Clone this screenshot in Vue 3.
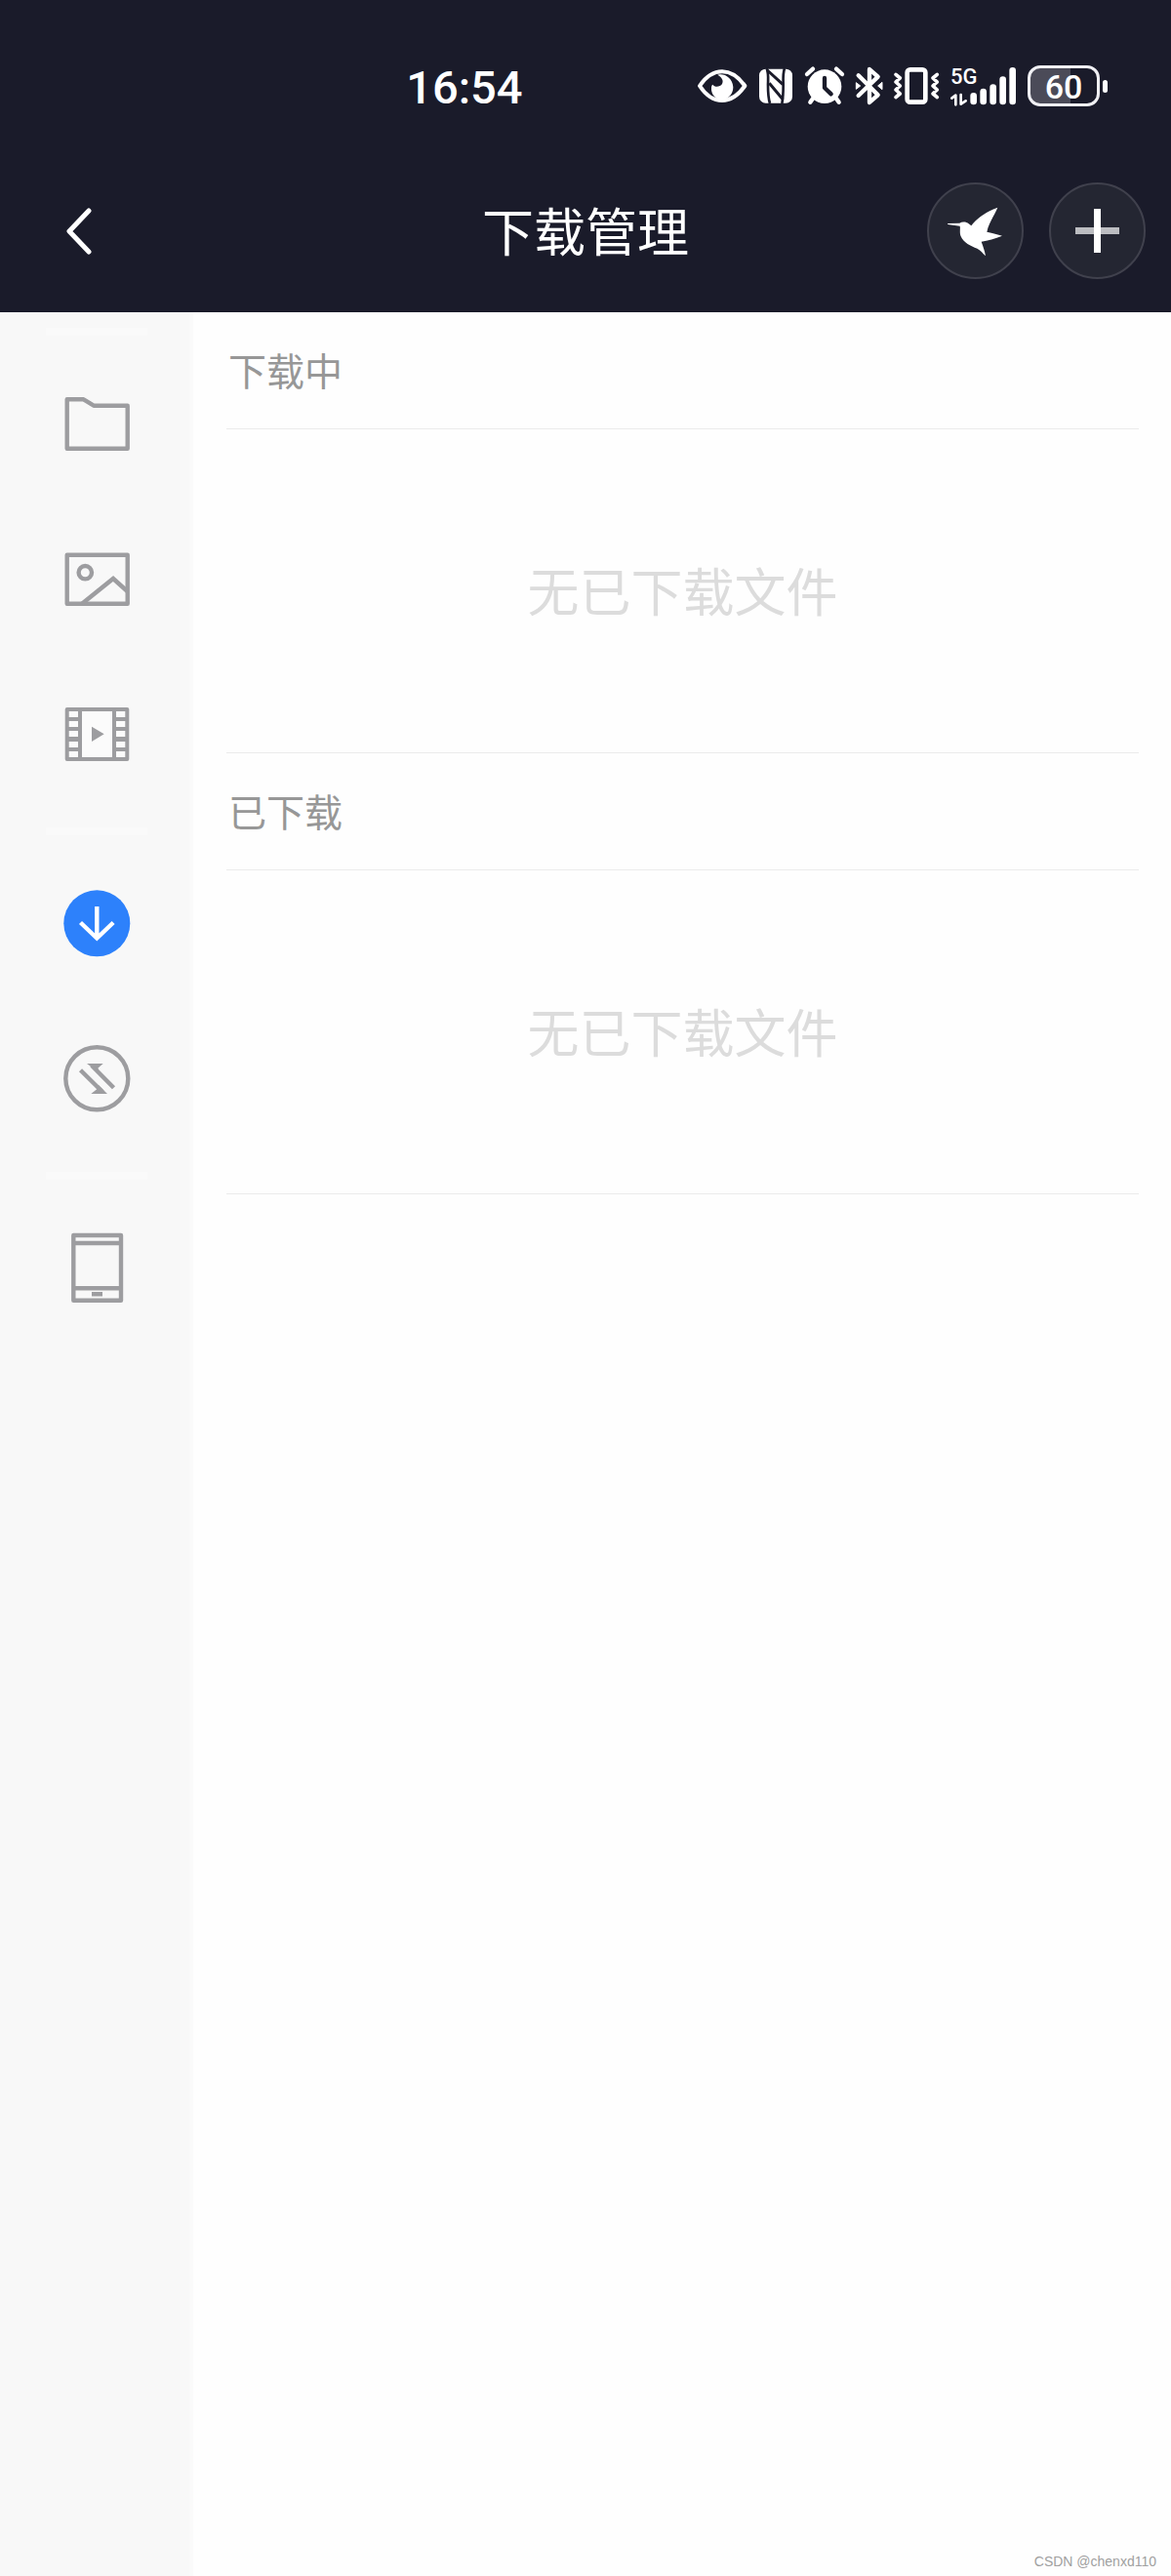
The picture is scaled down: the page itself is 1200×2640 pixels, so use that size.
<script setup>
import { ref } from 'vue'

const groups = [
  [
    { id: 'files', label: '文件' },
    { id: 'images', label: '图片' },
    { id: 'videos', label: '视频' }
  ],
  [
    { id: 'download', label: '下载' },
    { id: 'transfer', label: '传输' }
  ],
  [{ id: 'device', label: '设备' }]
]

const sections = [
  { id: 'downloading', title: '下载中', empty: '无已下载文件' },
  { id: 'downloaded', title: '已下载', empty: '无已下载文件' }
]

const filmHoles = [13, 23, 33, 44, 54]

const active = ref('download')
</script>

<template>
  <div class="page">
    <header class="header">
      <div class="status">
        <div class="status__left">
          <span class="status__time">16:54</span>
        </div>
        <div class="status__right">
          <svg width="50" height="40" viewBox="43 54 150 120">
            <path d="M49 114C68 86 92 70 118 70s50 16 70 44c-20 29-44 45-70 45s-50-16-69-45z" fill="none" stroke="#fff" stroke-width="12" stroke-linejoin="round" />
            <path d="M104 80c20-6 46 8 48 38 0 20-14 38-35 38-20 0-34-16-32-38 1-6 3-8 5-8 4 9 22 8 28-2 5-10 0-20-14-28z" fill="#fff" />
          </svg>
          <svg width="36" height="40" viewBox="228 54 108 120">
            <rect x="231" y="62" width="102" height="105" rx="20" fill="#fff" />
            <path d="M254 60c7 18 4 34 4 52s0 38 6 56M309 60c-6 18-4 34-4 52s0 38-4 56" fill="none" stroke="#1a1b2a" stroke-width="8" />
            <path d="M256 66l48 44M262 106l42 50" stroke="#1a1b2a" stroke-width="9" />
          </svg>
          <svg width="40" height="40" viewBox="373 54 120 120">
            <circle cx="433" cy="116" r="52" fill="#fff" />
            <path d="M379 78l18-16M469 62l18 16M399 150l-10 14M467 150l10 14" stroke="#fff" stroke-width="13" stroke-linecap="round" />
            <path d="M433 90v30l20 19" fill="none" stroke="#1a1b2a" stroke-width="13" stroke-linecap="round" stroke-linejoin="round" />
          </svg>
          <svg width="27" height="40" viewBox="530 54 81 120">
            <path d="M538 82l60 60-26 23V63l26 23-60 58" fill="none" stroke="#fff" stroke-width="13" stroke-linecap="round" stroke-linejoin="round" />
            <path d="M531 104l13 10-13 10zM611 103l-13 11 13 11z" fill="#fff" stroke="#fff" stroke-width="3" stroke-linejoin="round" />
          </svg>
          <svg width="46" height="40" viewBox="43 54 138 120">
            <rect x="84" y="64" width="56" height="100" rx="9" fill="none" stroke="#fff" stroke-width="14" />
            <path d="M49 79l13 11-13 12 13 12-13 12 13 12-13 11M176 79l-13 11 13 12-13 12 13 12-13 12 13 11" fill="none" stroke="#fff" stroke-width="11" stroke-linecap="round" stroke-linejoin="round" />
          </svg>
          <div class="signal">
            <div class="signal__net">
              <span>5G</span>
              <svg width="18" height="12" viewBox="220 134 54 36">
                <path d="M224 148l12-9v29M252 137v29l15-10" fill="none" stroke="#fff" stroke-width="8" stroke-linejoin="round" stroke-linecap="round" />
              </svg>
            </div>
            <svg width="47" height="40" viewBox="280 54 141 120">
              <path d="M291 145v17M321 132v30M351 119v43M381 95v67M411 67v95" stroke="#fff" stroke-width="20" stroke-linecap="round" />
            </svg>
          </div>
          <div class="battery">
            <div class="battery__body">60</div>
            <div class="battery__cap"></div>
          </div>
        </div>
      </div>

      <div class="nav">
        <button class="back" type="button" aria-label="返回">
          <svg width="30" height="50" viewBox="0 0 30 50">
            <path d="M25 4L5 25l20 21" fill="none" stroke="#fff" stroke-width="5" stroke-linecap="round" stroke-linejoin="round" />
          </svg>
        </button>
        <h1 class="nav__title">下载管理</h1>
        <div class="nav__actions">
          <button class="round" type="button" aria-label="迅雷">
            <svg width="60" height="60" viewBox="148 109 180 180">
              <path d="M151 175l37-1c8-5 22-4 28 2l8 6c18-25 48-44 81-56-11 26-28 48-33 75 17 4 32 8 47 12-20 9-42 14-64 18 5 14 10 28 13 44-9-9-16-18-26-23-20-7-42-18-50-37-5-12-1-24-3-32l-37-5z" fill="#fff" />
            </svg>
          </button>
          <button class="round" type="button" aria-label="新建">
            <svg width="45" height="45" viewBox="0 0 45 45">
              <path d="M0 19h45v7H0z" fill="#bcbdc1" />
              <path d="M19 0h7v45h-7z" fill="#fff" />
            </svg>
          </button>
        </div>
      </div>
    </header>

    <div class="body">
      <aside class="sidebar">
        <div v-for="(group, index) in groups" :key="index" class="group">
          <button v-for="item in group" :key="item.id" class="group__item" type="button"
                  :aria-label="item.label" :aria-pressed="item.id === active"
                  @click="active = item.id">
            <svg width="68" height="73" viewBox="0 0 68 73" fill="none" stroke="#9d9da0" stroke-width="4.4" stroke-linejoin="round">
              <path v-if="item.id === 'files'" d="M3.7 11.3H20.7L31 17.7H65.7V61.7H3.7z" />
              <template v-else-if="item.id === 'images'">
                <rect x="3.7" y="11.7" width="62" height="50" />
                <circle cx="22.3" cy="29.7" r="6.7" />
                <path d="M19 61.7L51 36l14.5 13" stroke-linejoin="miter" />
              </template>
              <template v-else-if="item.id === 'videos'">
                <rect x="1.7" y="9" width="65.6" height="55" rx="2" fill="#9d9da0" stroke="none" />
                <rect x="19" y="13" width="31" height="47" fill="#fbfbfb" stroke="none" />
                <template v-for="y in filmHoles" :key="y">
                  <rect x="5.7" :y="y" width="9.3" height="6" fill="#fbfbfb" stroke="none" />
                  <rect x="54" :y="y" width="9.3" height="6" fill="#fbfbfb" stroke="none" />
                </template>
                <path d="M29 28.7V44l12.7-7.7z" fill="#9d9da0" stroke="none" />
              </template>
              <template v-else-if="item.id === 'download'">
                <circle cx="34.3" cy="36.3" r="34" fill="#2d81fb" stroke="none" />
                <path d="M34.3 19v32M17.5 35.5l16.8 16 16.8-16" stroke="#fff" stroke-linejoin="miter" />
              </template>
              <template v-else-if="item.id === 'transfer'">
                <circle cx="34.3" cy="36.3" r="32" />
                <path d="M17.5 27.7L40 50M51.5 45.7L29 23" />
                <path d="M28.3 52H45L36 43l-1.5 4zM24 21h16.7l-5.2 4.5.5 4.5z" fill="#9d9da0" stroke="none" />
              </template>
              <template v-else>
                <rect x="10.3" y="3" width="48.7" height="66.7" />
                <path d="M10.3 11H59M10.3 57.3H59M29 63.3h11" />
              </template>
            </svg>
          </button>
        </div>
      </aside>

      <main class="content">
        <section v-for="section in sections" :key="section.id" class="section">
          <h2 class="section__title">{{ section.title }}</h2>
          <p class="section__empty">{{ section.empty }}</p>
        </section>
      </main>
    </div>

    <span class="watermark">CSDN @chenxd110</span>
  </div>
</template>

<style>
body {
  margin: 0;
}
</style>

<style scoped>
.page {
  position: relative;
  min-height: 100vh;
  display: flex;
  flex-direction: column;
  background: #fefefe;
  font-family: "Noto Sans CJK SC", sans-serif;
}

button {
  padding: 0;
  border: none;
  background: none;
  cursor: pointer;
}

svg {
  display: block;
  flex: none;
  overflow: visible;
}

.header {
  background: #1a1b2a;
  color: #fff;
}

.status {
  height: 130px;
  padding-top: 23px;
  display: flex;
  align-items: center;
  font-family: Roboto, sans-serif;
  font-weight: 500;
}

.status__left,
.status__right {
  flex: 1 1 0;
  display: flex;
  align-items: center;
  justify-content: flex-end;
}

.status__left {
  padding-right: 64px;
}

.status__right {
  gap: 12px;
  padding-right: 65px;
}

.status__time {
  padding-top: 4px;
  font-size: 47px;
  line-height: 56px;
}

.signal {
  display: flex;
}

.signal__net {
  width: 20px;
  height: 40px;
  display: flex;
  flex-direction: column;
  justify-content: space-between;
  font-size: 22px;
  line-height: 22px;
}

.battery {
  display: flex;
  align-items: center;
  gap: 3px;
}

.battery__body {
  box-sizing: border-box;
  width: 74px;
  height: 42px;
  border: 3px solid #f0f0f4;
  border-radius: 13px;
  background: linear-gradient(90deg, #4b4b58 60%, #1a1b2a 60%);
  text-align: center;
  font-size: 34px;
  line-height: 38px;
}

.battery__cap {
  width: 5px;
  height: 13px;
  border-radius: 3px;
  background: #fff;
}

.nav {
  height: 167px;
  display: grid;
  grid-template-columns: 1fr auto 1fr;
  align-items: center;
}

.back {
  justify-self: start;
  padding: 20px 66px;
}

.nav__title {
  margin: 0;
  padding-bottom: 4px;
  font-size: 53px;
  font-weight: 400;
  line-height: 80px;
}

.nav__actions {
  display: flex;
  justify-content: flex-end;
  gap: 26px;
  padding-right: 26px;
}

.round {
  box-sizing: border-box;
  width: 99px;
  height: 99px;
  display: flex;
  align-items: center;
  justify-content: center;
  border: 2px solid #40414d;
  border-radius: 50%;
  background: #242632;
}

.body {
  flex: 1 1 auto;
  display: flex;
}

.sidebar {
  flex: none;
  width: 198px;
  background: #f8f8f8;
  box-shadow: inset -4px 0 #fafafa;
}

.group {
  display: flex;
  flex-direction: column;
}

.group::before {
  content: '';
  width: 104px;
  height: 8px;
  margin: 16px auto 11px;
  background: #fafafa;
}

.group__item {
  height: 159px;
  display: flex;
  align-items: center;
  justify-content: center;
}

.content {
  flex: 1 1 0;
  padding: 0 33px 0 34px;
}

.section__title,
.section__empty {
  box-sizing: border-box;
  margin: 0;
  border-bottom: 1px solid #ebebeb;
  font-weight: 400;
}

.section__title {
  height: 120px;
  padding-left: 2px;
  color: #979797;
  font-size: 39px;
  line-height: 116px;
}

.section__empty {
  height: 332px;
  color: #dcdcdc;
  text-align: center;
  font-size: 53px;
  line-height: 328px;
}

.watermark {
  position: absolute;
  right: 15px;
  bottom: 5px;
  color: #a0a0a0;
  font-family: "Liberation Sans", sans-serif;
  font-size: 14px;
  line-height: 20px;
}
</style>
